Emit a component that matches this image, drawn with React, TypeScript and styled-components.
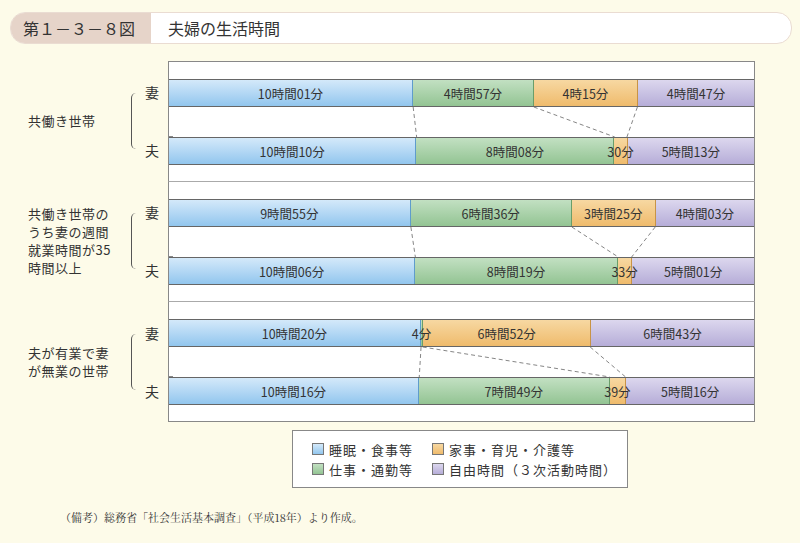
import React from 'react';
import styled, { createGlobalStyle } from 'styled-components';

const Global = createGlobalStyle`
  body {
    margin: 0;
    background: #fdfbe9;
    font-family: "Noto Sans CJK JP", "Noto Sans", sans-serif;
    color: #333;
  }
`;

const Page = styled.div`
  width: 800px;
  height: 543px;
  padding-top: 12px;
  box-sizing: border-box;
`;

const Header = styled.div`
  margin: 0 8px 0 10px;
  height: 30px;
  display: flex;
  border-radius: 15px;
  overflow: hidden;
  border: 1px solid #eadcd2;
  background: #fff;
`;

const FigNo = styled.div`
  width: 140px;
  box-sizing: border-box;
  background: #e6d4c9;
  display: flex;
  align-items: center;
  padding-left: 12px;
  font-size: 16px;
  color: #333;
`;

const Title = styled.div`
  display: flex;
  align-items: center;
  padding-left: 17px;
  font-size: 16px;
`;

const Chart = styled.div`
  margin-top: 17px;
  display: flex;
  flex-direction: column;
`;

const Group = styled.div`
  display: flex;
`;

const Side = styled.div`
  width: 168px;
  display: flex;
  align-items: center;
`;

const GroupLabel = styled.div`
  width: 103px;
  padding-left: 28px;
  font-size: 13px;
  line-height: 18px;
  letter-spacing: 0.5px;
`;

const Bracket = styled.div`
  width: 6px;
  height: 56px;
  border-left: 1px solid #555;
  border-radius: 5px 0 0 5px;
`;

const Names = styled.div`
  height: 86px;
  display: flex;
  flex-direction: column;
  justify-content: space-between;
  font-size: 14px;
  padding-left: 7px;
  line-height: 28px;
`;

const Plot = styled.div<{ $first: boolean; $last: boolean }>`
  position: relative;
  width: 585px;
  background: #fff;
  border-left: 1px solid #888;
  border-right: 1px solid #888;
  border-top: 1px solid ${p => (p.$first ? '#888' : '#aaa')};
  border-bottom: ${p => (p.$last ? '1px solid #888' : 'none')};
  padding: 17px 0 16px;
  display: flex;
  flex-direction: column;
  gap: 30px;
`;

const Tick = styled.div`
  position: absolute;
  left: 0;
  top: 74px;
  width: 4px;
  border-top: 1px solid #888;
`;

const Bar = styled.div`
  height: 28px;
  display: flex;
  border-top: 1px solid #666;
  border-bottom: 1px solid #666;
  box-sizing: border-box;
`;

const colors = [
  ['#d4e9fa', '#92c6ee', '#5f9ccc'],
  ['#c2e0c2', '#93c493', '#6a9e6a'],
  ['#f7d8a2', '#efbb6c', '#c89446'],
  ['#dcd7ee', '#b6add8', '#8c84b4'],
];

const Seg = styled.div<{ $c: number }>`
  min-width: 0;
  display: flex;
  align-items: center;
  justify-content: center;
  background: linear-gradient(${p => colors[p.$c][0]}, ${p => colors[p.$c][1]});
  border-right: 1px solid ${p => colors[p.$c][2]};
  box-sizing: border-box;
  &:last-child { border-right: none; }
`;

const SegText = styled.span`
  position: relative;
  z-index: 1;
  white-space: nowrap;
  font-size: 12.5px;
  color: #333;
`;

const Overlay = styled.svg`
  position: absolute;
  left: 0;
  top: 0;
  pointer-events: none;
`;

const Legend = styled.div`
  margin: 8px 0 0 292px;
  width: 336px;
  height: 58px;
  box-sizing: border-box;
  background: #fff;
  border: 1px solid #888;
  display: grid;
  grid-template-columns: 120px 1fr;
  align-content: center;
  padding-left: 19px;
  row-gap: 1px;
  font-size: 13px;
  letter-spacing: 1px;
`;

const LegendItem = styled.div`
  display: flex;
  align-items: center;
  gap: 5px;
  white-space: nowrap;
`;

const Swatch = styled.span<{ $c: number }>`
  width: 10px;
  height: 10px;
  background: linear-gradient(${p => colors[p.$c][0]}, ${p => colors[p.$c][1]});
  border: 1px solid #777;
`;

const Note = styled.div`
  margin: 21px 0 0 60px;
  font-family: "Noto Serif CJK JP", "Liberation Serif", serif;
  font-size: 11px;
  color: #333;
`;

const fmt = (m: number) => {
  const h = Math.floor(m / 60);
  const mm = m % 60;
  if (h === 0) return `${mm}分`;
  return `${h}時間${String(mm).padStart(2, '0')}分`;
};

type G = { label: string[]; wife: number[]; husband: number[] };

const groups: G[] = [
  { label: ['共働き世帯'], wife: [601, 297, 255, 287], husband: [610, 488, 30, 313] },
  { label: ['共働き世帯の', 'うち妻の週間', '就業時間が35', '時間以上'], wife: [595, 396, 205, 243], husband: [606, 499, 33, 301] },
  { label: ['夫が有業で妻', 'が無業の世帯'], wife: [620, 4, 412, 403], husband: [616, 469, 39, 316] },
];

const labelOverride: Record<string, string> = { '4:255': '4時15分' };

const W = 585;

const bounds = (d: number[]) => {
  const t = d.reduce((a, b) => a + b, 0);
  let acc = 0;
  return d.slice(0, 3).map(v => {
    acc += v;
    return (acc / t) * W;
  });
};

const BarRow: React.FC<{ data: number[] }> = ({ data }) => (
  <Bar>
    {data.map((m, i) => (
      <Seg key={i} $c={i} style={{ flexGrow: m, flexBasis: 0 }}>
        <SegText>{labelOverride[`${Math.floor(m / 60)}:${m}`] ?? fmt(m)}</SegText>
      </Seg>
    ))}
  </Bar>
);

const legend = ['睡眠・食事等', '家事・育児・介護等', '仕事・通勤等', '自由時間（３次活動時間）'];
const legendColor = [0, 2, 1, 3];

export default function App() {
  return (
    <Page>
      <Global />
      <Header>
        <FigNo>第１－３－８図</FigNo>
        <Title>夫婦の生活時間</Title>
      </Header>
      <Chart>
        {groups.map((g, gi) => {
          const a = bounds(g.wife);
          const b = bounds(g.husband);
          return (
            <Group key={gi}>
              <Side>
                <GroupLabel>
                  {g.label.map(l => (
                    <div key={l}>{l}</div>
                  ))}
                </GroupLabel>
                <Bracket />
                <Names>
                  <span>妻</span>
                  <span>夫</span>
                </Names>
              </Side>
              <Plot $first={gi === 0} $last={gi === groups.length - 1}>
                <BarRow data={g.wife} />
                <BarRow data={g.husband} />
                <Tick />
                <Overlay width={W} height={121}>
                  {a.map((x, i) => (
                    <line key={i} x1={x} y1={45} x2={b[i]} y2={75} stroke="#666" strokeWidth={0.8} strokeDasharray="4 3" />
                  ))}
                </Overlay>
              </Plot>
            </Group>
          );
        })}
      </Chart>
      <Legend>
        {legend.map((l, i) => (
          <LegendItem key={l}>
            <Swatch $c={legendColor[i]} />
            {l}
          </LegendItem>
        ))}
      </Legend>
      <Note>（備考）総務省「社会生活基本調査」（平成18年）より作成。</Note>
    </Page>
  );
}
